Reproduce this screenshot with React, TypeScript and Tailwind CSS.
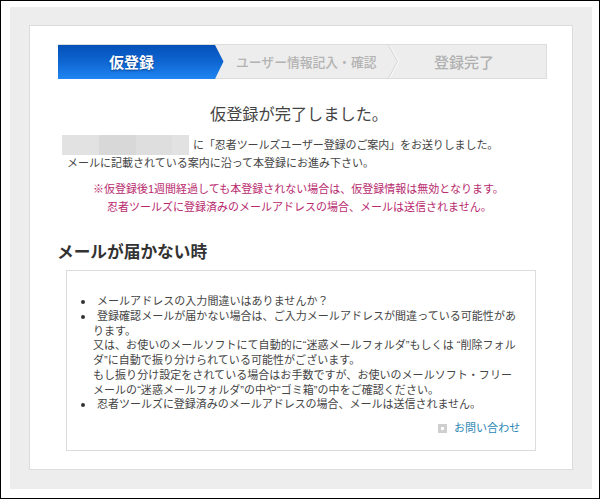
import type { ReactNode } from "react";

function Line({ children, className = "" }: { children: ReactNode; className?: string }) {
  return <span className={`block whitespace-nowrap ${className}`}>{children}</span>;
}

function Steps() {
  return (
    <div className="relative flex h-[35px] w-[489px]">
      <svg className="absolute inset-0" width="489" height="35" viewBox="0 0 489 35">
        <defs>
          <linearGradient id="active" x1="0" y1="0" x2="0" y2="1">
            <stop offset="0" stopColor="#0450b8" />
            <stop offset="0.5" stopColor="#0f66d2" />
            <stop offset="1" stopColor="#1f86f2" />
          </linearGradient>
        </defs>
        <rect x="0.5" y="0.5" width="488" height="34" fill="#ededed" stroke="#dcdcdc" />
        <path d="M331.5 1L340.5 17.5L331.5 34" fill="none" stroke="#f8f8f8" strokeWidth="1.5" />
        <path d="M330.5 1L339.5 17.5L330.5 34" fill="none" stroke="#d6d6d6" strokeWidth="1" />
        <path d="M0 1H157L165.5 17.5L157 35H0Z" fill="url(#active)" />
      </svg>
      <div className="relative w-[157px] pl-[51px] text-[15px] leading-[37px] font-bold whitespace-nowrap text-white [text-shadow:0_1px_2px_#06408c]">
        仮登録
      </div>
      <div className="relative w-[173px] pl-[21px] text-[12.8px] leading-[37px] font-medium whitespace-nowrap text-[#b3b3b3]">
        ユーザー情報記入・確認
      </div>
      <div className="relative grow pl-[46px] text-[15px] leading-[37px] font-medium whitespace-nowrap text-[#b0b0b0]">
        登録完了
      </div>
    </div>
  );
}

function Item({ children }: { children: ReactNode }) {
  return (
    <li className="flex">
      <span className="mt-[6px] mr-[8px] h-[4px] w-[4px] shrink-0 rounded-full bg-[#333]" />
      <div>{children}</div>
    </li>
  );
}

export default function App() {
  return (
    <div className="h-[499px] w-[600px] overflow-hidden border border-black bg-white pt-[6px] pl-[9px] font-['Liberation_Sans','Noto_Sans_CJK_JP',sans-serif] text-[#444]">
      <div className="h-[482px] w-[582px] bg-[#ededed] pt-[18px] pl-[19px]">
        <div className="h-[445px] w-[544px] border border-[#dcdcdc] bg-white pt-[18px] pl-[28px]">
          <Steps />
          <h1 className="mt-[23px] pl-[152px] text-[16.2px] leading-[24px] whitespace-nowrap">仮登録が完了しました。</h1>

          <div className="mt-[9px] text-[11px] leading-[18px]">
            <div className="flex h-[19px] pl-[4px]">
              <div className="mr-[4px] flex h-[20px] w-[127px] shrink-0">
                <div className="w-[37px] bg-[#e2e2e2]" />
                <div className="w-[37px] bg-[#d8d8d8]" />
                <div className="w-[36px] bg-[#dedede]" />
                <div className="grow bg-[#e2e2e2]" />
              </div>
              <Line className="pt-px tracking-[-0.09px]">に「忍者ツールズユーザー登録のご案内」をお送りしました。</Line>
            </div>
            <Line className="pl-[9px]">メールに記載されている案内に沿って本登録にお進み下さい。</Line>
          </div>

          <div className="mt-[8px] text-[11px] leading-[18px] text-[#b8296e]">
            <Line className="pl-[35px]">※仮登録後1週間経過しても本登録されない場合は、仮登録情報は無効となります。</Line>
            <Line className="pl-[49px]">忍者ツールズに登録済みのメールアドレスの場合、メールは送信されません。</Line>
          </div>

          <h2 className="mt-[25px] -ml-px text-[16.7px] leading-[24px] font-bold whitespace-nowrap text-[#333]">メールが届かない時</h2>

          <div className="mt-[5px] ml-[8px] h-[181px] w-[470px] border border-[#dcdcdc] pt-[23px] pl-[14px] text-[11px] leading-[14.75px] tracking-[0.04px]">
            <ul>
              <Item>
                <Line className="pl-[4px]">メールアドレスの入力間違いはありませんか？</Line>
              </Item>
              <Item>
                <Line className="pl-[4px]">登録確認メールが届かない場合は、ご入力メールアドレスが間違っている可能性があ</Line>
                <Line>ります。</Line>
                <Line>又は、お使いのメールソフトにて自動的に“迷惑メールフォルダ”もしくは “削除フォル</Line>
                <Line>ダ”に自動で振り分けられている可能性がございます。</Line>
                <Line>もし振り分け設定をされている場合はお手数ですが、お使いのメールソフト・フリー</Line>
                <Line>メールの“迷惑メールフォルダ”の中や“ゴミ箱”の中をご確認ください。</Line>
              </Item>
              <Item>
                <Line className="pl-[4px] tracking-[-0.02px]">忍者ツールズに登録済みのメールアドレスの場合、メールは送信されません。</Line>
              </Item>
            </ul>
            <div className="mt-[9px] flex items-center pl-[357px] text-[#2b86b4]">
              <span className="mr-[7px] h-[9px] w-[9px] border-[3px] border-[#cfcfcf] bg-white" />
              <a>お問い合わせ</a>
            </div>
          </div>
        </div>
      </div>
    </div>
  );
}
